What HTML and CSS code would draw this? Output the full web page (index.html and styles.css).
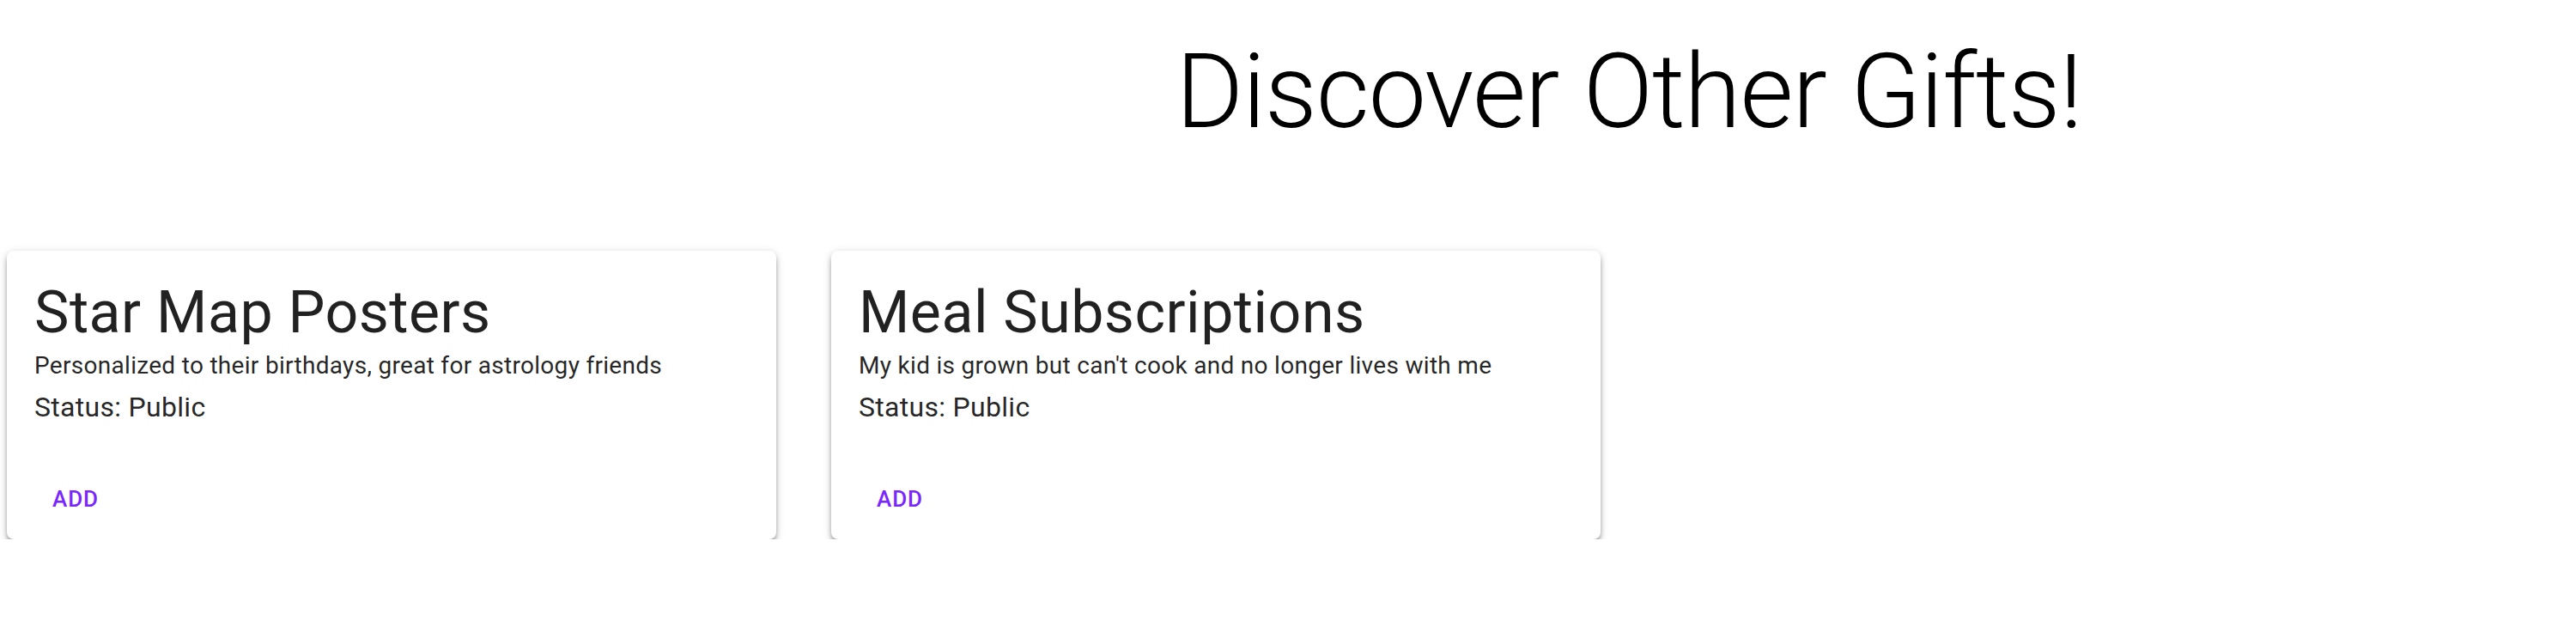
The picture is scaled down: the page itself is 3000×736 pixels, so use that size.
FILE: index.html
```html
<!DOCTYPE html>
<html lang="en">
<head>
<meta charset="utf-8">
<title>Discover Other Gifts!</title>
<link rel="stylesheet" href="styles.css">
</head>
<body>
<header class="page-header">
  <h1 class="page-title">Discover Other Gifts!</h1>
</header>
<main class="gift-grid">
  <article class="gift-card">
    <div class="card-content">
      <h2 class="card-title">Star Map Posters</h2>
      <p class="card-desc">Personalized to their birthdays, great for astrology friends</p>
      <p class="card-status">Status: Public</p>
    </div>
    <div class="card-actions">
      <button class="text-button" type="button">Add</button>
    </div>
  </article>
  <article class="gift-card">
    <div class="card-content">
      <h2 class="card-title">Meal Subscriptions</h2>
      <p class="card-desc">My kid is grown but can't cook and no longer lives with me</p>
      <p class="card-status">Status: Public</p>
    </div>
    <div class="card-actions">
      <button class="text-button" type="button">Add</button>
    </div>
  </article>
</main>
</body>
</html>
```
FILE: styles.css
```css
html, body {
  margin: 0;
  padding: 0;
  background: #ffffff;
}

body {
  font-family: Roboto, "Liberation Sans", Arial, sans-serif;
  color: rgba(0, 0, 0, 0.87);
}

.page-header {
  padding: 35px 0 0 794px;
  text-align: center;
}

.page-title {
  margin: 0;
  font-size: 120px;
  font-weight: 300;
  line-height: 1.2;
  letter-spacing: -1px;
  color: #000;
}

.gift-grid {
  display: flex;
  gap: 64px;
  padding: 113px 8px 0 8px;
}

.gift-card {
  width: 896px;
  height: 336px;
  box-sizing: border-box;
  background: #fff;
  border-radius: 8px;
  box-shadow: 0 6px 6px -2px rgba(0, 0, 0, 0.34),
              0 3px 6px 0 rgba(0, 0, 0, 0.16),
              0 2px 12px 0 rgba(0, 0, 0, 0.12);
  display: flex;
  flex-direction: column;
  overflow: hidden;
}

.card-content {
  padding: 30px 32px 0 32px;
  flex: 1;
}

.card-title {
  margin: 0;
  font-size: 68px;
  font-weight: 400;
  line-height: 84px;
  letter-spacing: 0.5px;
  color: rgba(0, 0, 0, 0.87);
}

.card-desc {
  margin: 0;
  font-size: 28px;
  font-weight: 400;
  line-height: 40px;
  letter-spacing: 0.3px;
  color: rgba(0, 0, 0, 0.87);
}

.card-status {
  margin: 0;
  font-size: 32px;
  font-weight: 400;
  line-height: 56px;
  letter-spacing: 0.3px;
  color: rgba(0, 0, 0, 0.87);
}

.card-actions {
  display: flex;
  align-items: center;
  padding: 16px;
}

.text-button {
  min-width: 128px;
  padding: 8px 10px;
  border: 0;
  background: transparent;
  border-radius: 8px;
  font-family: Roboto, "Liberation Sans", Arial, sans-serif;
  font-size: 26px;
  font-weight: 500;
  line-height: 45px;
  letter-spacing: 1px;
  text-transform: uppercase;
  color: #7a26ff;
  cursor: pointer;
}
```
